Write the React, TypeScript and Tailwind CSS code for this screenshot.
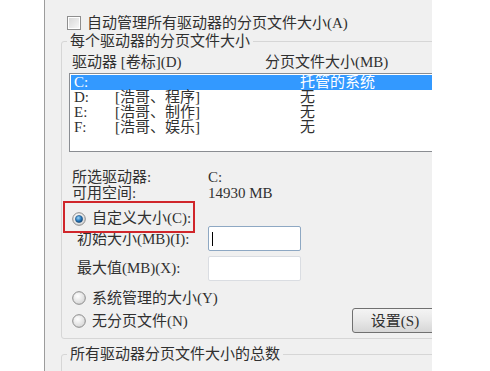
import React from 'react';

const font = { fontFamily: '"Liberation Serif", "Noto Sans CJK SC", serif' };

const drives = [
  { id: 'C:', label: '', size: '托管的系统', selected: true },
  { id: 'D:', label: '[浩哥、程序]', size: '无', selected: false },
  { id: 'E:', label: '[浩哥、制作]', size: '无', selected: false },
  { id: 'F:', label: '[浩哥、娱乐]', size: '无', selected: false },
];

const Radio = ({ checked }: { checked?: boolean }) => (
  <svg width="14" height="14" viewBox="0 0 14 14" className="shrink-0">
    <defs>
      <radialGradient id="rbg" cx="40%" cy="35%" r="70%">
        <stop offset="0%" stopColor="#ffffff" />
        <stop offset="100%" stopColor="#d4d4d4" />
      </radialGradient>
      <radialGradient id="rdot" cx="40%" cy="35%" r="70%">
        <stop offset="0%" stopColor="#9fd6f7" />
        <stop offset="55%" stopColor="#2a7cc0" />
        <stop offset="100%" stopColor="#0e3f6e" />
      </radialGradient>
    </defs>
    <circle cx="7" cy="7" r="6.3" fill="url(#rbg)" stroke="#8b8b8b" strokeWidth="1" />
    {checked && <circle cx="7" cy="7" r="3.6" fill="url(#rdot)" stroke="#1d4f7c" strokeWidth="0.6" />}
  </svg>
);

const Checkbox = () => (
  <div className="w-[14px] h-[14px] shrink-0 border border-[#8e8e8e] bg-white p-[1px]">
    <div className="w-full h-full bg-gradient-to-br from-[#d8d8d8] to-[#f7f7f7]" />
  </div>
);

export default function App() {
  return (
    <div className="flex w-[490px] h-[371px] bg-white overflow-hidden text-[15px] text-[#303030]" style={font}>
      <div className="w-[44px] shrink-0" />
      <div className="w-[388px] shrink-0 border-l border-[#9c9c9c] bg-[#f0f0f0] overflow-hidden">
        <div className="w-[440px]">
          {/* auto manage */}
          <div className="mt-[15px] h-[16px] flex items-center gap-[6px] pl-[22px] leading-[16px]">
            <Checkbox />
            <span>自动管理所有驱动器的分页文件大小(A)</span>
          </div>

          {/* per-drive group */}
          <fieldset className="mt-[1px] ml-[16px] w-[410px] border border-[#d6d6d6] rounded-[3px] pb-[5px]">
            <legend className="ml-[5px] px-[3px] leading-[18px]">每个驱动器的分页文件大小</legend>

            <div className="mt-[4px] h-[16px] flex pl-[10px] leading-[16px]">
              <span className="w-[193px] shrink-0">驱动器 [卷标](D)</span>
              <span>分页文件大小(MB)</span>
            </div>

            <div className="mt-[3px] ml-[7px] h-[79px] border border-[#8a8d92] bg-white p-[1px]">
              {drives.map((d) => (
                <div
                  key={d.id}
                  className={`grid grid-cols-[41px_185px_1fr] h-[15px] leading-[15px] pl-[3px] ${d.selected ? 'bg-[#3399ff] text-white' : ''}`}
                >
                  <span>{d.id}</span>
                  <span>{d.label}</span>
                  <span>{d.size}</span>
                </div>
              ))}
            </div>

            <div className="mt-[17px] pl-[10px] grid grid-cols-[136px_1fr] leading-[16px]">
              <span>所选驱动器:</span>
              <span>C:</span>
              <span>可用空间:</span>
              <span>14930 MB</span>
            </div>

            {/* custom size */}
            <div className="relative mt-[10px] h-[15px] flex items-center gap-[6px] pl-[10px] leading-[15px]">
              <Radio checked />
              <span>自定义大小(C):</span>
              <div className="pointer-events-none absolute left-[1px] top-[-10px] w-[132px] h-[32px] border-2 border-[#d0262b]" />
            </div>

            <div className="flex items-center h-[25px] pl-[15px]">
              <span className="w-[131px] shrink-0 pt-[2px]">初始大小(MB)(I):</span>
              <div className="w-[93px] h-[25px] border border-[#8ea8c3] rounded-[2px] bg-white flex items-center pl-[3px]">
                <div className="w-[1px] h-[14px] bg-black" />
              </div>
            </div>

            <div className="mt-[5px] flex items-center h-[25px] pl-[15px]">
              <span className="w-[131px] shrink-0">最大值(MB)(X):</span>
              <div className="w-[93px] h-[25px] border border-[#dadde2] rounded-[2px] bg-white" />
            </div>

            <div className="mt-[9px] h-[16px] flex items-center gap-[6px] pl-[10px] leading-[16px]">
              <Radio />
              <span>系统管理的大小(Y)</span>
            </div>

            <div className="mt-[2px] h-[25px] flex items-center">
              <div className="w-[290px] shrink-0 flex items-center gap-[6px] pl-[10px] leading-[16px]">
                <Radio />
                <span>无分页文件(N)</span>
              </div>
              <button className="w-[86px] h-[25px] rounded-[3px] border border-[#707070] bg-gradient-to-b from-[#f4f4f4] via-[#e8e8e8] to-[#d6d6d6] text-[15px] text-[#303030] leading-[20px]">
                设置(S)
              </button>
            </div>
          </fieldset>

          {/* totals group */}
          <fieldset className="mt-[6px] ml-[16px] w-[410px] h-[60px] border border-[#d6d6d6] rounded-[3px]">
            <legend className="ml-[5px] px-[3px] leading-[18px]">所有驱动器分页文件大小的总数</legend>
          </fieldset>
        </div>
      </div>
    </div>
  );
}
